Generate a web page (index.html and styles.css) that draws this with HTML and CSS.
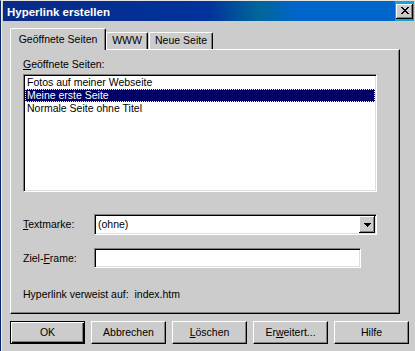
FILE: index.html
```html
<!DOCTYPE html>
<html>
<head>
<meta charset="utf-8">
<link rel="stylesheet" href="styles.css">
</head>
<body>
<div class="window">
  <div class="titlebar">
    <span class="title">Hyperlink erstellen</span>
    <span class="close"><svg width="8" height="7" viewBox="0 0 8 7" shape-rendering="crispEdges"><path d="M0 0h2v1H0zM6 0h2v1H6zM1 1h2v1H1zM5 1h2v1H5zM2 2h4v1H2zM3 3h2v1H3zM2 4h4v1H2zM1 5h2v1H1zM5 5h2v1H5zM0 6h2v1H0zM6 6h2v1H6z" fill="#000"/></svg></span>
  </div>
  <div class="body">
    <div class="tabs">
      <div class="tab active">Geöffnete Seiten</div>
      <div class="tab www">WWW</div>
      <div class="tab neue">Neue Seite</div>
    </div>
    <div class="panel">
      <div class="label"><u>G</u>eöffnete Seiten:</div>
      <div class="listbox">
        <div class="item">Fotos auf meiner Webseite</div>
        <div class="item sel">Meine erste Seite</div>
        <div class="item">Normale Seite ohne Titel</div>
      </div>
      <div class="row r1">
        <span class="rlabel"><u>T</u>extmarke:</span>
        <div class="combo">
          <span class="value">(ohne)</span>
          <span class="drop"><svg width="7" height="4" viewBox="0 0 7 4" shape-rendering="crispEdges"><path d="M0 0h7v1H0zM1 1h5v1H1zM2 2h3v1H2zM3 3h1v1H3z" fill="#000"/></svg></span>
        </div>
      </div>
      <div class="row r2">
        <span class="rlabel">Ziel-<u>F</u>rame:</span>
        <div class="input"></div>
      </div>
      <div class="info">Hyperlink verweist auf:&nbsp; index.htm</div>
    </div>
    <div class="buttons">
      <div class="btn default">OK</div>
      <div class="btn">Abbrechen</div>
      <div class="btn"><span><u>L</u>öschen</span></div>
      <div class="btn"><span>Er<u>w</u>eitert...</span></div>
      <div class="btn">Hilfe</div>
    </div>
  </div>
</div>
</body>
</html>
```
FILE: styles.css
```css
* { box-sizing: border-box; }
body {
  margin: 0;
  font-family: "Liberation Sans", Arial, sans-serif;
  font-size: 10.5px;
  color: #000;
  background: #cccccc;
}
u { text-decoration: underline; text-underline-offset: 1px; }
.window {
  width: 415px;
  height: 351px;
  background: #cccccc;
  border-left: 1px solid #0a246a;
  border-top: 1px solid #e4e4e4;
  box-shadow: inset 1px 0 0 #eeeeee;
  display: flex;
  flex-direction: column;
}
.titlebar {
  margin-left: 2px;
  width: 411px;
  height: 20px;
  display: flex;
  align-items: center;
  justify-content: space-between;
  padding: 0 1px 0 4px;
  background: linear-gradient(90deg, #0a2a86 0%, #00339c 50%, #006699 62%, #0066cc 72%, #0066cc 95.4%, #10a8d0 95.5%, #10a8d0 100%);
}
.title {
  color: #fff;
  font-weight: bold;
  font-size: 11.5px;
  padding-top: 1px;
}
.close {
  width: 17px;
  height: 15px;
  background: #cccccc;
  box-shadow: inset -1px -1px 0 #000, inset 1px 1px 0 #fff, inset -2px -2px 0 #808080;
  display: flex;
  align-items: center;
  justify-content: center;
  padding-bottom: 1px;
}
.close svg { display: block; }
.body {
  padding: 7px 0 0 9px;
}
.tabs {
  display: flex;
  align-items: flex-end;
  height: 21px;
}
.tab {
  height: 17px;
  border-top: 1px solid #fff;
  border-left: 1px solid #fff;
  border-right: 1px solid #000;
  border-radius: 2px 2px 0 0;
  box-shadow: inset -1px 0 0 #808080;
  text-align: center;
  line-height: 13px;
  padding-top: 1px;
  background: #cccccc;
  white-space: nowrap;
}
.tab.active {
  width: 96px;
  height: 22px;
  margin-bottom: -1px;
  padding-top: 4px;
  position: relative;
  z-index: 1;
}
.tab.www { width: 42px; }
.tab.neue { width: 64px; margin-left: 1px; }
.panel {
  width: 390px;
  height: 265px;
  border-top: 1px solid #fff;
  border-left: 1px solid #fff;
  border-right: 1px solid #000;
  border-bottom: 1px solid #000;
  box-shadow: inset -1px -1px 0 #808080;
  padding: 8px 0 0 12px;
}
.label {
  line-height: 13px;
  height: 13px;
}
.listbox {
  margin-top: 3px;
  width: 354px;
  height: 118px;
  background: #fff;
  border: 1px solid;
  border-color: #808080 #fff #fff #808080;
  box-shadow: inset 1px 1px 0 #000, inset -1px -1px 0 #dfdfdf;
  padding: 1px;
}
.item {
  height: 13px;
  line-height: 13px;
  padding-left: 2px;
  white-space: nowrap;
}
.item.sel {
  background: #000066;
  color: #fff;
  outline: 1px dotted #ffff88;
  outline-offset: -1px;
}
.row {
  display: flex;
  align-items: center;
}
.r1 { margin-top: 22px; }
.r2 { margin-top: 13px; }
.rlabel {
  width: 71px;
  line-height: 13px;
}
.combo, .input {
  background: #fff;
  border: 1px solid;
  border-color: #808080 #fff #fff #808080;
  box-shadow: inset 1px 1px 0 #000, inset -1px -1px 0 #dfdfdf;
  padding: 1px;
}
.combo {
  width: 283px;
  height: 21px;
  display: flex;
  align-items: center;
  justify-content: space-between;
}
.value {
  padding-left: 2px;
  line-height: 13px;
}
.drop {
  width: 16px;
  height: 17px;
  background: #cccccc;
  box-shadow: inset -1px -1px 0 #000, inset 1px 1px 0 #fff, inset -2px -2px 0 #808080;
  display: flex;
  align-items: center;
  justify-content: center;
  padding-top: 1px;
}
.drop svg { display: block; }
.input {
  width: 267px;
  height: 20px;
}
.info {
  margin-top: 20px;
  line-height: 13px;
}
.buttons {
  display: flex;
  gap: 6px;
  margin-top: 7px;
}
.btn {
  width: 75px;
  height: 23px;
  border-top: 1px solid #fff;
  border-left: 1px solid #fff;
  border-right: 1px solid #000;
  border-bottom: 1px solid #000;
  box-shadow: inset -1px -1px 0 #808080;
  display: flex;
  align-items: center;
  justify-content: center;
  line-height: 13px;
}
.btn.default {
  border: 1px solid #000;
  box-shadow: inset 1px 1px 0 #fff, inset -1px -1px 0 #000, inset -2px -2px 0 #808080;
}
```
